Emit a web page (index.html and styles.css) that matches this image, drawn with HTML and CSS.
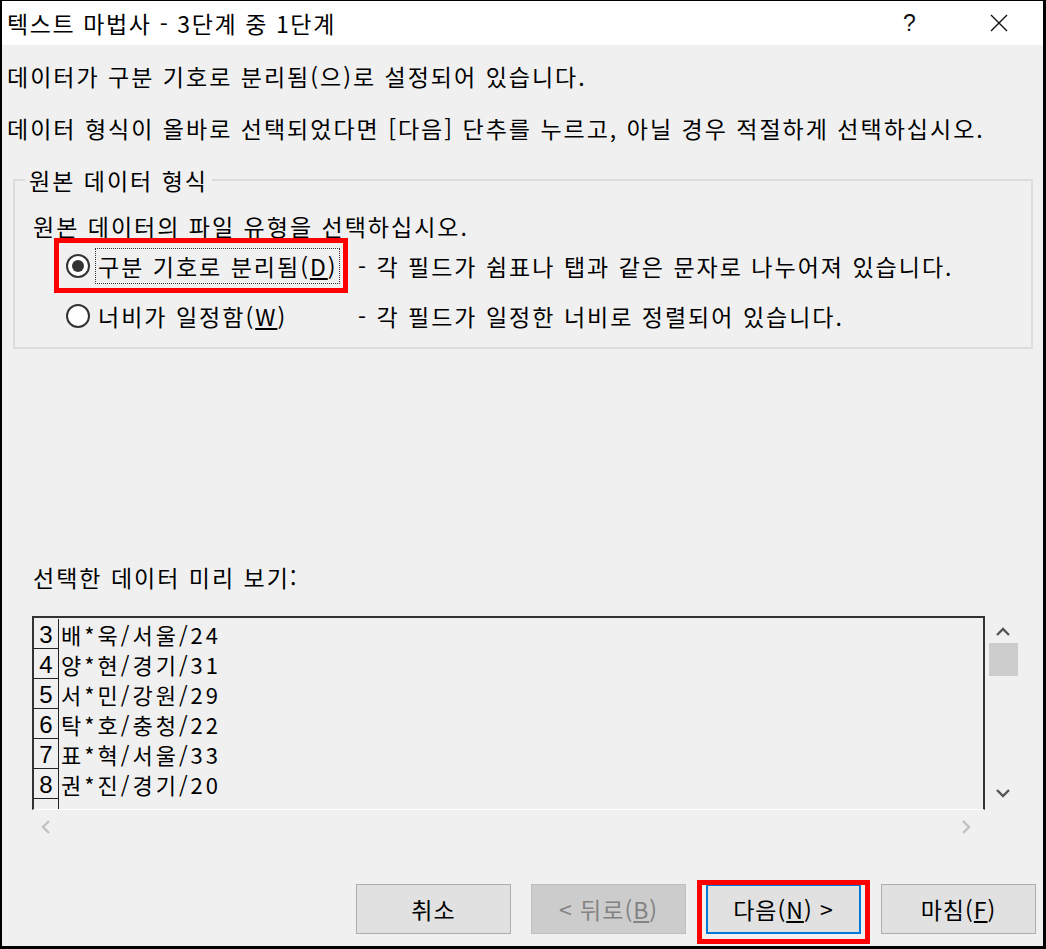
FILE: index.html
```html
<!DOCTYPE html>
<html lang="ko">
<head>
    <meta charset="UTF-8">
    <title>텍스트 마법사 - 3단계 중 1단계</title>
    <link rel="stylesheet" href="styles.css">
</head>
<body>
    <div class="window">
        <header class="titlebar">
            <span class="title">텍스트 마법사 - 3단계 중 1단계</span>
            <span class="help">?</span>
            <span class="close">
                <svg width="20" height="20" viewBox="0 0 20 20"><path d="M2 2 L18 18 M18 2 L2 18" stroke="#111" stroke-width="1.4" fill="none"/></svg>
            </span>
        </header>

        <div class="content">
            <p class="line first">데이터가 구분 기호로 분리됨(으)로 설정되어 있습니다.</p>
            <p class="line second">데이터 형식이 올바로 선택되었다면 [다음] 단추를 누르고, 아닐 경우 적절하게 선택하십시오.</p>

            <fieldset class="group">
                <legend>원본 데이터 형식</legend>
                <p class="line sub">원본 데이터의 파일 유형을 선택하십시오.</p>
                <div class="radio-row">
                    <span class="radio checked"></span>
                    <span class="radio-label focused">구분 기호로 분리됨(<u>D</u>)</span>
                    <span class="radio-desc">- 각 필드가 쉼표나 탭과 같은 문자로 나누어져 있습니다.</span>
                    <span class="highlight radio-mark"></span>
                </div>
                <div class="radio-row">
                    <span class="radio"></span>
                    <span class="radio-label">너비가 일정함(<u>W</u>)</span>
                    <span class="radio-desc">- 각 필드가 일정한 너비로 정렬되어 있습니다.</span>
                </div>
            </fieldset>

            <p class="line preview-title">선택한 데이터 미리 보기:</p>

            <div class="preview-wrap">
                <div class="preview">
                    <div class="row"><span class="num">3</span><span class="data">배*욱/서울/24</span></div>
                    <div class="row"><span class="num">4</span><span class="data">양*현/경기/31</span></div>
                    <div class="row"><span class="num">5</span><span class="data">서*민/강원/29</span></div>
                    <div class="row"><span class="num">6</span><span class="data">탁*호/충청/22</span></div>
                    <div class="row"><span class="num">7</span><span class="data">표*혁/서울/33</span></div>
                    <div class="row"><span class="num">8</span><span class="data">권*진/경기/20</span></div>
                    <div class="row"><span class="num"></span><span class="data"></span></div>
                </div>
                <div class="vscroll">
                    <svg width="16" height="10" viewBox="0 0 16 10"><path d="M2 8 L8 2 L14 8" stroke="#555" stroke-width="2.4" fill="none"/></svg>
                    <div class="thumb"></div>
                    <div class="spacer"></div>
                    <svg width="16" height="10" viewBox="0 0 16 10"><path d="M2 2 L8 8 L14 2" stroke="#555" stroke-width="2.4" fill="none"/></svg>
                </div>
            </div>
            <div class="hscroll">
                <svg width="10" height="16" viewBox="0 0 10 16"><path d="M8 2 L2 8 L8 14" stroke="#c2c2c2" stroke-width="2.4" fill="none"/></svg>
                <svg width="10" height="16" viewBox="0 0 10 16"><path d="M2 2 L8 8 L2 14" stroke="#c2c2c2" stroke-width="2.4" fill="none"/></svg>
            </div>

            <div class="buttons">
                <button class="button">취소</button>
                <button class="button" disabled>&lt; 뒤로(<u>B</u>)</button>
                <div class="next-wrap">
                    <button class="button default">다음(<u>N</u>) &gt;</button>
                    <span class="highlight next-mark"></span>
                </div>
                <button class="button">마침(<u>F</u>)</button>
            </div>
        </div>
    </div>
</body>
</html>
```

FILE: styles.css
```css
body {
    margin: 0;
    background-color: #000;
    font-family: "Noto Sans CJK KR", "Noto Sans", sans-serif;
    color: #000;
}
.window {
    width: 1041px;
    height: 945px;
    margin: 1px 0 0 2px;
    background-color: #f0f0f0;
    overflow: hidden;
}
.titlebar {
    height: 44px;
    background-color: #fff;
    display: flex;
    align-items: center;
}
.title {
    font-size: 23px;
    letter-spacing: 1.6px;
    margin-left: 5px;
    flex: 1;
}
.help {
    font-size: 23px;
    width: 20px;
    color: #111;
    margin-right: 66px;
    font-family: "Liberation Sans", sans-serif;
}
.close {
    width: 20px;
    height: 20px;
    margin-right: 34px;
}
.content {
    padding: 16px 0 0 0;
}
.line {
    margin: 0;
    font-size: 23px;
    letter-spacing: 2px;
    line-height: 30px;
    white-space: nowrap;
}
.first {
    margin-left: 5px;
}
.second {
    margin: 22px 0 0 5px;
}
.group {
    margin: 22px 10px 0 11px;
    padding: 0 0 6px 18px;
    border: 2px solid #dcdcdc;
    min-width: 0;
}
.group legend {
    font-size: 23px;
    letter-spacing: 2px;
    line-height: 30px;
    padding: 0 4px;
    margin-left: -8px;
}
.sub {
    margin-top: 16px;
}
.radio-row {
    position: relative;
    display: flex;
    align-items: center;
    height: 50px;
    font-size: 23px;
    letter-spacing: 2px;
    white-space: nowrap;
}
.radio {
    width: 20px;
    height: 20px;
    border: 2px solid #333;
    border-radius: 50%;
    background-color: #fff;
    margin-left: 33px;
    margin-right: 5px;
    display: flex;
    align-items: center;
    justify-content: center;
    flex-shrink: 0;
}
.radio.checked::after {
    content: "";
    width: 12px;
    height: 12px;
    border-radius: 50%;
    background-color: #333;
}
.radio-label {
    width: 239px;
    padding: 0 2px;
    line-height: 34px;
    border: 1px dotted transparent;
    flex-shrink: 0;
}
.radio-label.focused {
    border-color: #333;
}
.radio-desc {
    margin-left: 18px;
}
.highlight {
    position: absolute;
    border: 5px solid #f00;
}
.radio-mark {
    left: 21px;
    top: -3px;
    width: 284px;
    height: 45px;
}
.preview-title {
    margin: 213px 0 0 31px;
}
.preview-wrap {
    display: flex;
    margin: 24px 0 0 30px;
}
.preview {
    width: 949px;
    height: 190px;
    border-top: 2px solid #333;
    border-left: 2px solid #333;
    border-right: 2px solid #333;
    border-bottom: 1px solid #fff;
    overflow: hidden;
    padding-top: 1px;
}
.row {
    display: flex;
    height: 30px;
}
.num {
    width: 24px;
    flex-shrink: 0;
    border: 1px solid #222;
    border-top: none;
    border-left: none;
    font-size: 24px;
    line-height: 31px;
    text-align: center;
    font-family: "Liberation Sans", sans-serif;
}
.data {
    padding-left: 2px;
    font-size: 22px;
    line-height: 30px;
    letter-spacing: 3px;
}
.vscroll {
    width: 32px;
    margin-left: 2px;
    display: flex;
    flex-direction: column;
    align-items: center;
    padding-top: 11px;
}
.thumb {
    width: 29px;
    height: 33px;
    background-color: #cdcdcd;
    margin-top: 6px;
}
.spacer {
    flex: 1;
}
.vscroll svg:last-child {
    margin-bottom: 12px;
}
.hscroll {
    display: flex;
    justify-content: space-between;
    width: 930px;
    margin: 9px 0 0 39px;
}
.buttons {
    display: flex;
    gap: 20px;
    margin: 49px 0 0 354px;
}
.button {
    width: 155px;
    height: 50px;
    background-color: #e1e1e1;
    border: 1px solid #adadad;
    font-family: "Noto Sans CJK KR", sans-serif;
    font-size: 23px;
    letter-spacing: 1px;
    color: #000;
    padding: 0;
}
.button:disabled {
    background-color: #cccccc;
    border-color: #bfbfbf;
    color: #838383;
}
.button.default {
    border: 2px solid #0078d7;
}
.next-wrap {
    position: relative;
}
.next-mark {
    left: -9px;
    top: -4px;
    width: 163px;
    height: 54px;
}
```
